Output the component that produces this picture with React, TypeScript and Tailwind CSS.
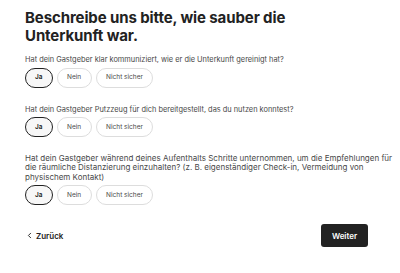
import { ChevronLeft } from "lucide-react";

const questions = [
  {
    text: "Hat dein Gastgeber klar kommuniziert, wie er die Unterkunft gereinigt hat?",
    cls: "text-[7.4px] leading-[9px]",
  },
  {
    text: "Hat dein Gastgeber Putzzeug für dich bereitgestellt, das du nutzen konntest?",
    cls: "text-[7.4px] leading-[9px]",
  },
  {
    text: "Hat dein Gastgeber während deines Aufenthalts Schritte unternommen, um die Empfehlungen für die räumliche Distanzierung einzuhalten? (z. B. eigenständiger Check-in, Vermeidung von physischem Kontakt)",
    cls: "text-[8px] leading-[9.3px]",
  },
];

const options = ["Ja", "Nein", "Nicht sicher"];

const Choice = ({ label, selected }: { label: string; selected: boolean }) => (
  <button
    className={
      selected
        ? "h-[20px] rounded-full border-[1.5px] border-[#222222] bg-[#f7f7f7] px-[9px] text-[6.5px] font-semibold leading-none text-[#222222]"
        : "h-[20px] rounded-full border border-[#dddddd] bg-white px-[9.5px] text-[6.5px] leading-none text-[#484848]"
    }
  >
    {label}
  </button>
);

export default function App() {
  return (
    <div
      className="flex h-[273px] w-[400px] flex-col bg-white pl-[25px] pt-[9px] text-[#222222]"
      style={{ fontFamily: "Inter, 'Liberation Sans', sans-serif" }}
    >
      <h1 className="w-[290px] text-[15px] font-bold leading-[18px] tracking-[-0.1px]">
        Beschreibe uns bitte, wie sauber die Unterkunft war.
      </h1>

      <div className="mt-[10px] flex flex-col gap-[17px]">
        {questions.map((q, i) => (
          <div key={i} className="flex flex-col gap-[3.5px]">
            <p className={`w-[375px] text-[#484848] ${q.cls}`}>{q.text}</p>
            <div className="flex gap-[4px]">
              {options.map((o) => (
                <Choice key={o} label={o} selected={o === "Ja"} />
              ))}
            </div>
          </div>
        ))}
      </div>

      <div className="mt-[19px] flex h-[23px] w-[343px] items-center justify-between">
        <button className="flex items-center gap-[2px] text-[8px] font-semibold leading-none text-[#222222]">
          <ChevronLeft size={9} strokeWidth={2.5} />
          Zurück
        </button>
        <button className="h-[23px] w-[47px] rounded-[3px] bg-[#222222] text-[8px] font-semibold leading-none text-white">
          Weiter
        </button>
      </div>
    </div>
  );
}
